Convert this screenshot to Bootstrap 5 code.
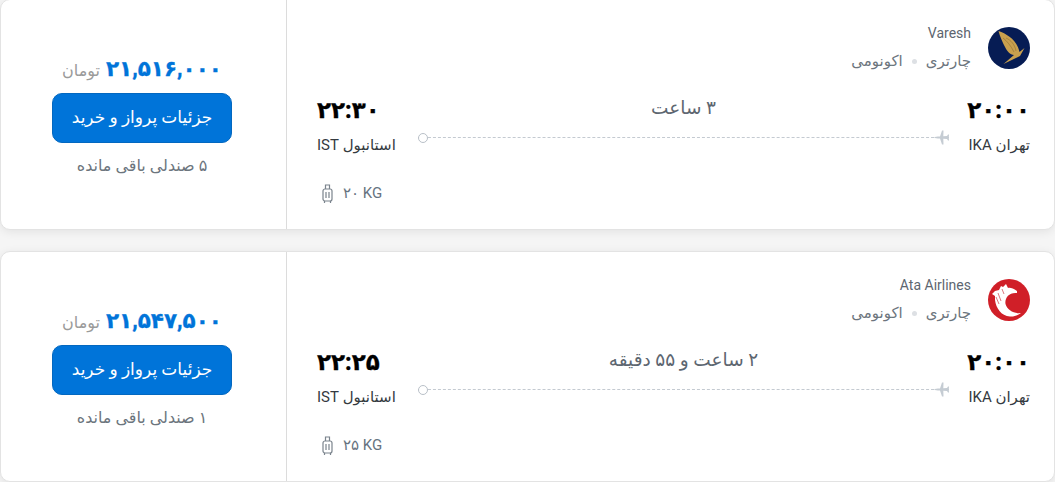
<!DOCTYPE html>
<html lang="fa" dir="rtl">
<head>
<meta charset="utf-8">
<link rel="stylesheet" href="https://cdn.jsdelivr.net/npm/bootstrap@5.3.0/dist/css/bootstrap.min.css">
<style>
html,body{height:482px;overflow:hidden;background:#f5f5f5}
body{font-family:Roboto,"DejaVu Sans",sans-serif;color:#212529}
.fl-list{margin-top:-1px;display:flex;flex-direction:column;gap:21px}
.fl-card{height:231px;background:#fff;border:1px solid #e3e3e3;border-radius:10px;box-shadow:0 2px 10px rgba(0,0,0,.08);display:flex;overflow:hidden}
.fl-main{flex:1 1 auto;min-width:0;border-left:1px solid #dcdcdc;padding:27px 24px 0 30px;display:flex;flex-direction:column}
.fl-side{flex:0 0 285px;padding-right:3px;display:flex;flex-direction:column;align-items:center}
.fl-head{display:flex;gap:17px}
.fl-logo{width:42px;height:42px;flex:none;display:block}
.fl-name{font-size:14px;color:#5d6670;line-height:18px;margin-top:-3px;text-align:right}
.fl-tags{font-size:15px;color:#6c757d;line-height:18px;margin-top:10px;display:flex;align-items:center;gap:9px}
.fl-dot{width:5px;height:5px;border-radius:50%;background:#dde0e4}
.fl-time{font-size:23px;font-weight:800;color:#000;line-height:26px;-webkit-text-stroke:.3px #000;margin-top:1px}
.fl-city{font-size:15px;color:#343a40;line-height:20px;margin-top:11px}
.fl-dest{text-align:left}
.fl-route{margin-top:27px}
.fl-mid{flex:1 1 auto;position:relative;height:65px;margin:0 18px 0 22px}
.fl-dur{text-align:center;font-size:18.500px;color:#5d6670;line-height:22px}
.fl-line{position:absolute;right:0;left:0;top:40px;border-top:1px dashed #c4cad1}
.fl-plane{position:absolute;right:0;top:-8px}
.fl-circle{position:absolute;left:0;top:-5px;width:10px;height:10px;border:1px solid #b9c0c8;border-radius:50%;background:#fff}
.fl-bag{font-size:15px;color:#667380;line-height:20px;margin-top:21px;padding-left:5px;display:flex;align-items:center;gap:10px;justify-content:flex-end}
.fl-price{margin-top:54px;line-height:30px;display:flex;align-items:baseline;gap:6px;justify-content:center}
.fl-amount{font-size:21.500px;font-weight:800;color:#0074d9;-webkit-text-stroke:.3px #0074d9}
.fl-cur{font-size:16px;color:#9a9a9a}
.fl-btn{width:180px;height:50px;background:#0074d9;border:1px solid #0368c0;border-radius:10px;color:#fff;font-size:17px;margin-top:7px;display:flex;align-items:center;justify-content:center}
.fl-left{font-size:16px;color:#6c757d;line-height:20px;margin-top:13px}
</style>
</head>
<body>
<div class="fl-list">
  <div class="fl-card">
    <div class="fl-main">
      <div class="fl-head">
        <svg class="fl-logo" viewBox="0 0 42 42"><circle cx="21" cy="21" r="21" fill="#061c54"/><path d="M10.500 4C19 7 29 13 31.500 25L36.500 21 32 29 15.500 37 26 28C22 28 19 24 17 20 15 16 12 10 10.500 4z" fill="#c9a04e"/><path d="M18 11c5 2 9 7 10 13M15 11c4 3 8 8 11 14" stroke="#8f7034" stroke-width=".6" fill="none"/></svg>
        <div>
          <div class="fl-name" dir="ltr">Varesh</div>
          <div class="fl-tags"><span>چارتری</span><span class="fl-dot"></span><span>اکونومی</span></div>
        </div>
      </div>
      <div class="fl-route d-flex">
        <div><div class="fl-time">۲۰:۰۰</div><div class="fl-city">تهران IKA</div></div>
        <div class="fl-mid">
          <div class="fl-dur">۳ ساعت</div>
          <div class="fl-line">
            <svg class="fl-plane" width="15" height="15" viewBox="0 0 15 15"><path d="M0 7.500C1 6.600 3 6.500 6 6.400L8 .5H9.500L9.300 6.300 13 6 14 4.500H15L14.800 7.500 15 10.500H14L13 9 9.300 8.700 9.500 14.500H8L6 8.600C3 8.500 1 8.400 0 7.500z" fill="#c5ccd3"/></svg>
            <span class="fl-circle"></span>
          </div>
        </div>
        <div class="fl-dest"><div class="fl-time">۲۲:۳۰</div><div class="fl-city">استانبول IST</div></div>
      </div>
      <div class="fl-bag">
        <span dir="ltr">۲۰ KG</span>
        <svg width="11" height="19" viewBox="0 0 11 19" fill="none" stroke="#7b848d" stroke-width="1.200"><rect x="1" y="5" width="9" height="12" rx="2"/><path d="M3.500 5V1h4v4M4 8v6M7 8v6M2.500 17v2M8.500 17v2"/></svg>
      </div>
    </div>
    <div class="fl-side">
      <div class="fl-price"><span class="fl-amount">۲۱,۵۱۶,۰۰۰</span><span class="fl-cur">تومان</span></div>
      <a class="fl-btn text-decoration-none" href="#">جزئیات پرواز و خرید</a>
      <div class="fl-left">۵ صندلی باقی مانده</div>
    </div>
  </div>
  <div class="fl-card">
    <div class="fl-main">
      <div class="fl-head">
        <svg class="fl-logo" viewBox="0 0 42 42"><circle cx="21" cy="21" r="21" fill="#d01f28"/><path d="M29 12C25 9 22 8.500 20 9L18 5 15 8 13 7 11 11 7 12 4 15 7 17 7 21C8 29 13 37 22 37.500 26 38 30 36 33 34 26 35 19 31 17.500 25 16.500 19 21 13 29 14z" fill="#fff"/><path d="M10 14 13 22M8 18 11 25M14 10 16 15" stroke="#dc7a7f" stroke-width="1" fill="none"/></svg>
        <div>
          <div class="fl-name" dir="ltr">Ata Airlines</div>
          <div class="fl-tags"><span>چارتری</span><span class="fl-dot"></span><span>اکونومی</span></div>
        </div>
      </div>
      <div class="fl-route d-flex">
        <div><div class="fl-time">۲۰:۰۰</div><div class="fl-city">تهران IKA</div></div>
        <div class="fl-mid">
          <div class="fl-dur">۲ ساعت و ۵۵ دقیقه</div>
          <div class="fl-line">
            <svg class="fl-plane" width="15" height="15" viewBox="0 0 15 15"><path d="M0 7.500C1 6.600 3 6.500 6 6.400L8 .5H9.500L9.300 6.300 13 6 14 4.500H15L14.800 7.500 15 10.500H14L13 9 9.300 8.700 9.500 14.500H8L6 8.600C3 8.500 1 8.400 0 7.500z" fill="#c5ccd3"/></svg>
            <span class="fl-circle"></span>
          </div>
        </div>
        <div class="fl-dest"><div class="fl-time">۲۲:۲۵</div><div class="fl-city">استانبول IST</div></div>
      </div>
      <div class="fl-bag">
        <span dir="ltr">۲۵ KG</span>
        <svg width="11" height="19" viewBox="0 0 11 19" fill="none" stroke="#7b848d" stroke-width="1.200"><rect x="1" y="5" width="9" height="12" rx="2"/><path d="M3.500 5V1h4v4M4 8v6M7 8v6M2.500 17v2M8.500 17v2"/></svg>
      </div>
    </div>
    <div class="fl-side">
      <div class="fl-price"><span class="fl-amount">۲۱,۵۴۷,۵۰۰</span><span class="fl-cur">تومان</span></div>
      <a class="fl-btn text-decoration-none" href="#">جزئیات پرواز و خرید</a>
      <div class="fl-left">۱ صندلی باقی مانده</div>
    </div>
  </div>
</div>
<script src="https://cdn.jsdelivr.net/npm/bootstrap@5.3.0/dist/js/bootstrap.bundle.min.js"></script>
</body>
</html>
